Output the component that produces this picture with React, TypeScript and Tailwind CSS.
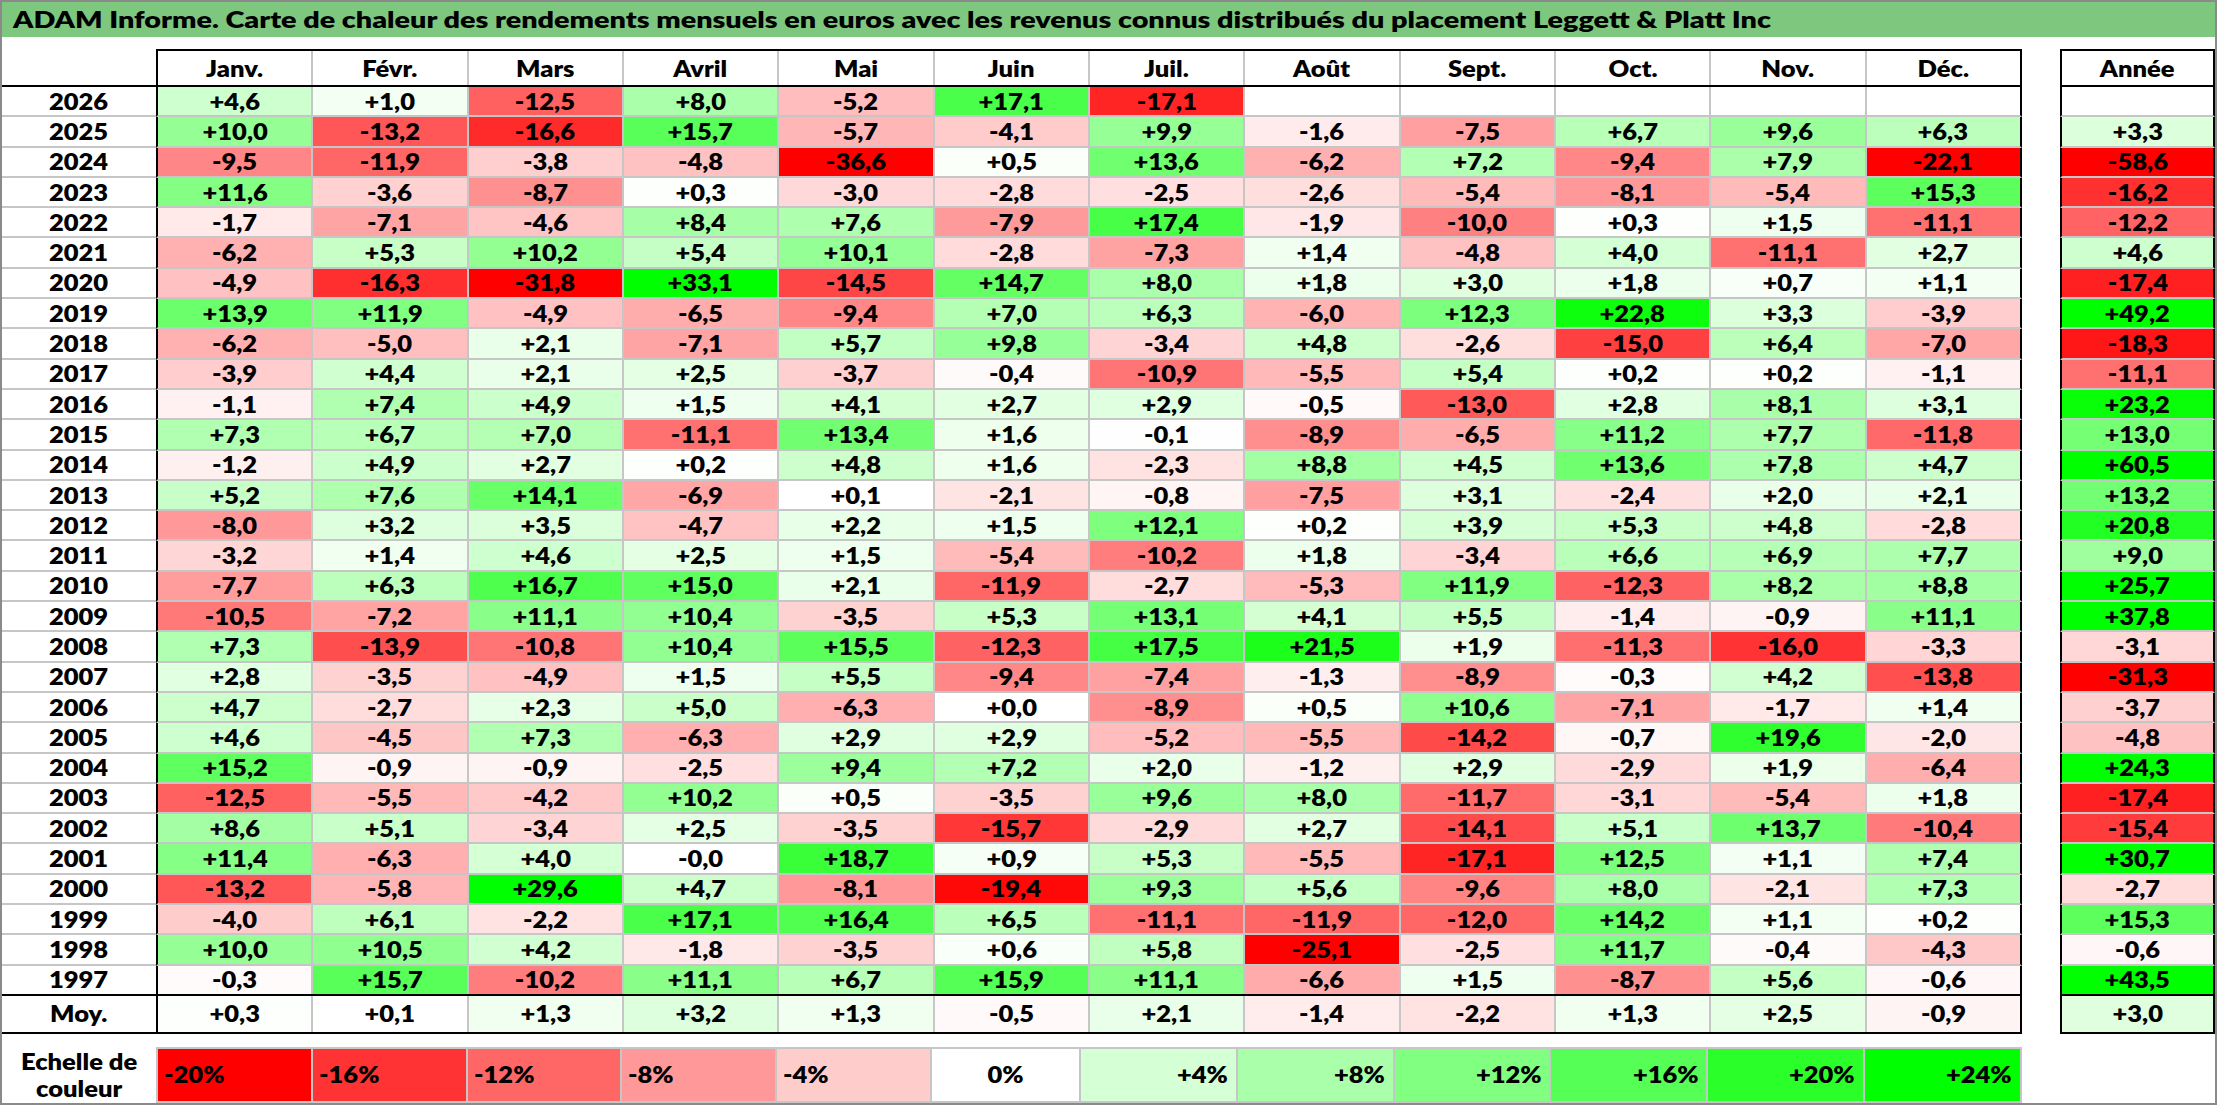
import { Fragment } from "react";

const MONTHS = ["Janv.", "Févr.", "Mars", "Avril", "Mai", "Juin", "Juil.", "Août", "Sept.", "Oct.", "Nov.", "Déc."];

// year, 12 months, year total ("" = no value)
const ROWS: [string, string[], string][] = [
  ["2026", ["+4,6", "+1,0", "-12,5", "+8,0", "-5,2", "+17,1", "-17,1", "", "", "", "", ""], ""],
  ["2025", ["+10,0", "-13,2", "-16,6", "+15,7", "-5,7", "-4,1", "+9,9", "-1,6", "-7,5", "+6,7", "+9,6", "+6,3"], "+3,3"],
  ["2024", ["-9,5", "-11,9", "-3,8", "-4,8", "-36,6", "+0,5", "+13,6", "-6,2", "+7,2", "-9,4", "+7,9", "-22,1"], "-58,6"],
  ["2023", ["+11,6", "-3,6", "-8,7", "+0,3", "-3,0", "-2,8", "-2,5", "-2,6", "-5,4", "-8,1", "-5,4", "+15,3"], "-16,2"],
  ["2022", ["-1,7", "-7,1", "-4,6", "+8,4", "+7,6", "-7,9", "+17,4", "-1,9", "-10,0", "+0,3", "+1,5", "-11,1"], "-12,2"],
  ["2021", ["-6,2", "+5,3", "+10,2", "+5,4", "+10,1", "-2,8", "-7,3", "+1,4", "-4,8", "+4,0", "-11,1", "+2,7"], "+4,6"],
  ["2020", ["-4,9", "-16,3", "-31,8", "+33,1", "-14,5", "+14,7", "+8,0", "+1,8", "+3,0", "+1,8", "+0,7", "+1,1"], "-17,4"],
  ["2019", ["+13,9", "+11,9", "-4,9", "-6,5", "-9,4", "+7,0", "+6,3", "-6,0", "+12,3", "+22,8", "+3,3", "-3,9"], "+49,2"],
  ["2018", ["-6,2", "-5,0", "+2,1", "-7,1", "+5,7", "+9,8", "-3,4", "+4,8", "-2,6", "-15,0", "+6,4", "-7,0"], "-18,3"],
  ["2017", ["-3,9", "+4,4", "+2,1", "+2,5", "-3,7", "-0,4", "-10,9", "-5,5", "+5,4", "+0,2", "+0,2", "-1,1"], "-11,1"],
  ["2016", ["-1,1", "+7,4", "+4,9", "+1,5", "+4,1", "+2,7", "+2,9", "-0,5", "-13,0", "+2,8", "+8,1", "+3,1"], "+23,2"],
  ["2015", ["+7,3", "+6,7", "+7,0", "-11,1", "+13,4", "+1,6", "-0,1", "-8,9", "-6,5", "+11,2", "+7,7", "-11,8"], "+13,0"],
  ["2014", ["-1,2", "+4,9", "+2,7", "+0,2", "+4,8", "+1,6", "-2,3", "+8,8", "+4,5", "+13,6", "+7,8", "+4,7"], "+60,5"],
  ["2013", ["+5,2", "+7,6", "+14,1", "-6,9", "+0,1", "-2,1", "-0,8", "-7,5", "+3,1", "-2,4", "+2,0", "+2,1"], "+13,2"],
  ["2012", ["-8,0", "+3,2", "+3,5", "-4,7", "+2,2", "+1,5", "+12,1", "+0,2", "+3,9", "+5,3", "+4,8", "-2,8"], "+20,8"],
  ["2011", ["-3,2", "+1,4", "+4,6", "+2,5", "+1,5", "-5,4", "-10,2", "+1,8", "-3,4", "+6,6", "+6,9", "+7,7"], "+9,0"],
  ["2010", ["-7,7", "+6,3", "+16,7", "+15,0", "+2,1", "-11,9", "-2,7", "-5,3", "+11,9", "-12,3", "+8,2", "+8,8"], "+25,7"],
  ["2009", ["-10,5", "-7,2", "+11,1", "+10,4", "-3,5", "+5,3", "+13,1", "+4,1", "+5,5", "-1,4", "-0,9", "+11,1"], "+37,8"],
  ["2008", ["+7,3", "-13,9", "-10,8", "+10,4", "+15,5", "-12,3", "+17,5", "+21,5", "+1,9", "-11,3", "-16,0", "-3,3"], "-3,1"],
  ["2007", ["+2,8", "-3,5", "-4,9", "+1,5", "+5,5", "-9,4", "-7,4", "-1,3", "-8,9", "-0,3", "+4,2", "-13,8"], "-31,3"],
  ["2006", ["+4,7", "-2,7", "+2,3", "+5,0", "-6,3", "+0,0", "-8,9", "+0,5", "+10,6", "-7,1", "-1,7", "+1,4"], "-3,7"],
  ["2005", ["+4,6", "-4,5", "+7,3", "-6,3", "+2,9", "+2,9", "-5,2", "-5,5", "-14,2", "-0,7", "+19,6", "-2,0"], "-4,8"],
  ["2004", ["+15,2", "-0,9", "-0,9", "-2,5", "+9,4", "+7,2", "+2,0", "-1,2", "+2,9", "-2,9", "+1,9", "-6,4"], "+24,3"],
  ["2003", ["-12,5", "-5,5", "-4,2", "+10,2", "+0,5", "-3,5", "+9,6", "+8,0", "-11,7", "-3,1", "-5,4", "+1,8"], "-17,4"],
  ["2002", ["+8,6", "+5,1", "-3,4", "+2,5", "-3,5", "-15,7", "-2,9", "+2,7", "-14,1", "+5,1", "+13,7", "-10,4"], "-15,4"],
  ["2001", ["+11,4", "-6,3", "+4,0", "-0,0", "+18,7", "+0,9", "+5,3", "-5,5", "-17,1", "+12,5", "+1,1", "+7,4"], "+30,7"],
  ["2000", ["-13,2", "-5,8", "+29,6", "+4,7", "-8,1", "-19,4", "+9,3", "+5,6", "-9,6", "+8,0", "-2,1", "+7,3"], "-2,7"],
  ["1999", ["-4,0", "+6,1", "-2,2", "+17,1", "+16,4", "+6,5", "-11,1", "-11,9", "-12,0", "+14,2", "+1,1", "+0,2"], "+15,3"],
  ["1998", ["+10,0", "+10,5", "+4,2", "-1,8", "-3,5", "+0,6", "+5,8", "-25,1", "-2,5", "+11,7", "-0,4", "-4,3"], "-0,6"],
  ["1997", ["-0,3", "+15,7", "-10,2", "+11,1", "+6,7", "+15,9", "+11,1", "-6,6", "+1,5", "-8,7", "+5,6", "-0,6"], "+43,5"],
];

const AVG = ["+0,3", "+0,1", "+1,3", "+3,2", "+1,3", "-0,5", "+2,1", "-1,4", "-2,2", "+1,3", "+2,5", "-0,9"];
const AVG_YEAR = "+3,0";

const SCALE = [-20, -16, -12, -8, -4, 0, 4, 8, 12, 16, 20, 24];

function heat(v: number | null): string {
  if (v === null || Number.isNaN(v)) return "#ffffff";
  if (v < 0) {
    const c = Math.round(255 * (1 - Math.min(-v / 20, 1)));
    return `rgb(255,${c},${c})`;
  }
  const c = Math.round(255 * (1 - Math.min(v / 24, 1)));
  return `rgb(${c},255,${c})`;
}

function num(s: string): number | null {
  if (!s) return null;
  return parseFloat(s.replace(",", "."));
}

function Txt({ children }: { children: React.ReactNode }) {
  return <span className="inline-block scale-x-[1.16]">{children}</span>;
}

type Kind = "head" | "row" | "last" | "avg";

function Line({ label, cells, year, kind }: { label: string; cells: string[]; year: string; kind: Kind }) {
  const h = kind === "row" || kind === "last" ? "h-[30.3px]" : "h-[38px]";
  const bottom = kind === "row" ? "border-b-2 border-b-[#c6c6c6]" : "border-b-2 border-b-black";
  const top = kind === "head" ? "border-t-2 border-t-black" : "";
  return (
    <div className={`flex ${h}`}>
      <div className={`w-[154px] flex items-center justify-center ${bottom}`}>
        <Txt>{label}</Txt>
      </div>
      <div className={`w-[1866px] flex border-x-2 border-x-black ${bottom} ${top}`}>
        {cells.map((c, i) => (
          <div
            key={i}
            className={`flex-1 flex items-center justify-center ${i < 11 ? "border-r-2 border-r-[#c6c6c6]" : ""}`}
            style={kind === "head" ? undefined : { backgroundColor: heat(num(c)) }}
          >
            <Txt>{c}</Txt>
          </div>
        ))}
      </div>
      <div className="w-[38px]" />
      <div
        className={`w-[155px] flex items-center justify-center border-x-2 border-x-black ${bottom} ${top}`}
        style={kind === "head" ? undefined : { backgroundColor: heat(num(year)) }}
      >
        <Txt>{year}</Txt>
      </div>
    </div>
  );
}

export default function App() {
  return (
    <div
      className="w-[2217px] h-[1105px] border-2 border-[#8a8a8a] bg-white text-black font-extrabold text-[22px] overflow-hidden"
      style={{ fontFamily: "Lato, 'Open Sans', sans-serif" }}
    >
      <div className="h-[35px] bg-[#7ec77f] flex items-center pl-[11px] text-[23px]">
        <span className="inline-block origin-left scale-x-[1.25] whitespace-nowrap">
          ADAM Informe. Carte de chaleur des rendements mensuels en euros avec les revenus connus distribués du placement Leggett &amp; Platt Inc
        </span>
      </div>

      <div className="pt-[12px]">
        <Line label="" cells={MONTHS} year="Année" kind="head" />
        {ROWS.map(([y, cells, total], i) => (
          <Fragment key={y}>
            <Line label={y} cells={cells} year={total} kind={i === ROWS.length - 1 ? "last" : "row"} />
          </Fragment>
        ))}
        <Line label="Moy." cells={AVG} year={AVG_YEAR} kind="avg" />

        <div className="flex h-[56.3px] mt-[12.7px]">
          <div className="w-[154px] flex flex-col items-center justify-center leading-[27px]">
            <Txt>Echelle de</Txt>
            <Txt>couleur</Txt>
          </div>
          <div className="w-[1866px] flex border-2 border-[#c6c6c6]">
            {SCALE.map((v, i) => (
              <div
                key={v}
                className={`flex-1 flex items-center ${
                  v < 0 ? "justify-start pl-[6px]" : v === 0 ? "justify-center" : "justify-end pr-[8px]"
                } ${i < 11 ? "border-r-2 border-r-[#c6c6c6]" : ""}`}
                style={{ backgroundColor: heat(v) }}
              >
                <span className={`inline-block scale-x-[1.16] ${v < 0 ? "origin-left" : v > 0 ? "origin-right" : ""}`}>
                  {v > 0 ? `+${v}%` : `${v}%`}
                </span>
              </div>
            ))}
          </div>
        </div>
      </div>
    </div>
  );
}
